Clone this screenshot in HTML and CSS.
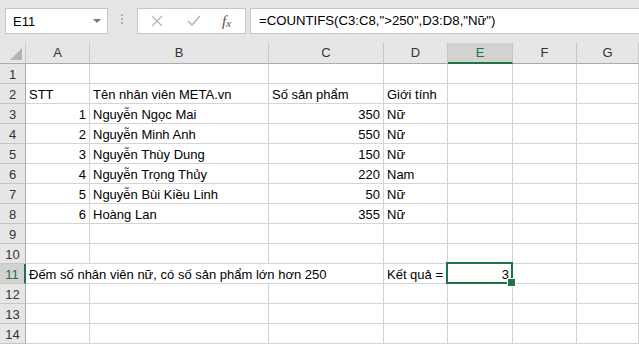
FILE: index.html
```html
<!DOCTYPE html>
<html lang="vi">
<head>
    <meta charset="UTF-8">
    <meta name="viewport" content="width=device-width, initial-scale=1.0">
    <title>COUNTIFS</title>
    <link rel="stylesheet" href="styles.css">
</head>
<body>
    <div class="formula-bar">
        <div class="name-box">
            <span>E11</span>
            <span class="caret"></span>
        </div>
        <div class="grip"><i></i><i></i><i></i></div>
        <div class="fx-box">
            <svg class="btn-icon" width="12" height="12" viewBox="0 0 12 12"><path d="M1 1 L11 11 M11 1 L1 11" stroke="#b8b8b8" stroke-width="1.4" fill="none"/></svg>
            <svg class="btn-icon" width="14" height="12" viewBox="0 0 14 12"><path d="M1 6 L5 10 L13 1" stroke="#b8b8b8" stroke-width="1.6" fill="none"/></svg>
            <span class="fx">f<sub>x</sub></span>
        </div>
        <div class="formula">=COUNTIFS(C3:C8,"&gt;250",D3:D8,"Nữ")</div>
    </div>

    <div class="sheet">
        <div class="hd corner"></div>
        <div class="hd">A</div>
        <div class="hd">B</div>
        <div class="hd">C</div>
        <div class="hd">D</div>
        <div class="hd active-col">E</div>
        <div class="hd">F</div>
        <div class="hd">G</div>

        <div class="rh">1</div><div></div><div></div><div></div><div></div><div></div><div></div><div></div>

        <div class="rh">2</div><div>STT</div><div>Tên nhân viên META.vn</div><div>Số sản phẩm</div><div>Giới tính</div><div></div><div></div><div></div>

        <div class="rh">3</div><div class="num">1</div><div>Nguyễn Ngọc Mai</div><div class="num">350</div><div>Nữ</div><div></div><div></div><div></div>
        <div class="rh">4</div><div class="num">2</div><div>Nguyễn Minh Anh</div><div class="num">550</div><div>Nữ</div><div></div><div></div><div></div>
        <div class="rh">5</div><div class="num">3</div><div>Nguyễn Thùy Dung</div><div class="num">150</div><div>Nữ</div><div></div><div></div><div></div>
        <div class="rh">6</div><div class="num">4</div><div>Nguyễn Trọng Thủy</div><div class="num">220</div><div>Nam</div><div></div><div></div><div></div>
        <div class="rh">7</div><div class="num">5</div><div>Nguyễn Bùi Kiều Linh</div><div class="num">50</div><div>Nữ</div><div></div><div></div><div></div>
        <div class="rh">8</div><div class="num">6</div><div>Hoàng Lan</div><div class="num">355</div><div>Nữ</div><div></div><div></div><div></div>

        <div class="rh">9</div><div></div><div></div><div></div><div></div><div></div><div></div><div></div>
        <div class="rh">10</div><div></div><div></div><div></div><div></div><div></div><div></div><div></div>

        <div class="rh active-row">11</div><div class="span3">Đếm số nhân viên nữ, có số sản phẩm lớn hơn 250</div><div>Kết quả =</div><div class="num active-cell">3</div><div></div><div></div>

        <div class="rh">12</div><div></div><div></div><div></div><div></div><div></div><div></div><div></div>
        <div class="rh">13</div><div></div><div></div><div></div><div></div><div></div><div></div><div></div>
        <div class="rh">14</div><div></div><div></div><div></div><div></div><div></div><div></div><div></div>
    </div>
</body>
</html>
```

FILE: styles.css
```css
* {
    box-sizing: border-box;
}
body {
    margin: 0;
    padding: 0;
    width: 639px;
    height: 344px;
    overflow: hidden;
    background: #fff;
    font-family: "Liberation Sans", Arial, sans-serif;
    font-size: 13px;
    color: #000;
}

/* formula bar */
.formula-bar {
    display: flex;
    align-items: flex-start;
    height: 43px;
    padding: 8px 0 0 5px;
    background: #e6e6e6;
}
.name-box {
    display: flex;
    align-items: center;
    justify-content: space-between;
    width: 103px;
    height: 26px;
    padding: 0 6px 0 7px;
    background: #fff;
    border: 1px solid #c6c6c6;
}
.caret {
    width: 0;
    height: 0;
    border-left: 4px solid transparent;
    border-right: 4px solid transparent;
    border-top: 4px solid #777;
}
.grip {
    display: flex;
    flex-direction: column;
    gap: 2px;
    margin: 6px 14px 0 13px;
}
.grip i {
    width: 2px;
    height: 2px;
    background: #b0b0b0;
}
.fx-box {
    display: flex;
    align-items: center;
    width: 109px;
    height: 26px;
    padding: 0 0 0 13px;
    background: #fff;
    border: 1px solid #c6c6c6;
}
.fx-box .btn-icon:first-child {
    margin-right: 24px;
}
.fx {
    margin-left: 21px;
    font-family: "Liberation Serif", "Times New Roman", serif;
    font-style: italic;
    font-size: 15px;
    color: #555;
}
.fx sub {
    font-size: 11px;
    vertical-align: -1px;
}
.formula {
    flex: 1;
    height: 26px;
    margin-left: 4px;
    padding: 0 8px;
    line-height: 24px;
    font-size: 13.2px;
    background: #fff;
    border: 1px solid #c6c6c6;
    border-right: none;
    white-space: nowrap;
}

/* grid */
.sheet {
    display: grid;
    grid-template-columns: 26px 64px 179px 115px 64px 65px 64px 1fr;
    grid-template-rows: 21px;
    grid-auto-rows: 20px;
}
.sheet > div {
    border-right: 1px solid #d4d4d4;
    border-bottom: 1px solid #d4d4d4;
    padding: 1px 3px 0;
    line-height: 19px;
    white-space: nowrap;
    overflow: visible;
}
.sheet > .hd {
    background: #e6e6e6;
    border-right-color: #c6c6c6;
    border-bottom-color: #ababab;
    text-align: center;
    color: #333;
    line-height: 20px;
    padding: 0;
}
.sheet > .rh {
    background: #e6e6e6;
    border-right-color: #ababab;
    border-bottom-color: #c6c6c6;
    text-align: center;
    color: #333;
    padding: 1px 0 0;
}
.corner {
    position: relative;
}
.corner::after {
    content: "";
    position: absolute;
    right: 3px;
    bottom: 3px;
    border-left: 12px solid transparent;
    border-bottom: 12px solid #b4b4b4;
}
.sheet > .active-col {
    background: #d2d2d2;
    border-bottom: 2px solid #217346;
    color: #217346;
}
.sheet > .active-row {
    background: #d2d2d2;
    border-right: 2px solid #217346;
    color: #217346;
}
.num {
    text-align: right;
}
.span3 {
    grid-column: span 3;
}
.active-cell {
    position: relative;
}
.active-cell::before {
    content: "";
    position: absolute;
    top: -2px;
    left: -2px;
    right: -1px;
    bottom: -1px;
    border: 2px solid #217346;
}
.active-cell::after {
    content: "";
    position: absolute;
    right: -4px;
    bottom: -4px;
    width: 7px;
    height: 7px;
    background: #217346;
    border: 1px solid #fff;
}
```
